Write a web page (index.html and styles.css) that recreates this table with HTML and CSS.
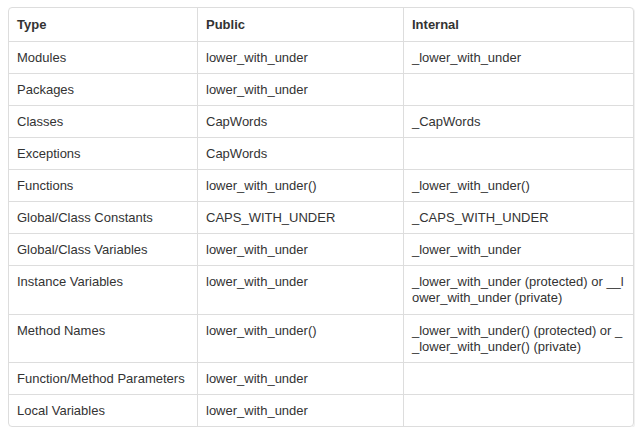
FILE: index.html
```html
<!DOCTYPE html>
<html>
<head>
<meta charset="utf-8">
<link rel="stylesheet" href="styles.css">
</head>
<body>
<div class="wrap">
<table class="names">
<colgroup><col class="c1"><col class="c2"><col class="c3"></colgroup>
<thead>
<tr><th>Type</th><th>Public</th><th>Internal</th></tr>
</thead>
<tbody>
<tr><td>Modules</td><td>lower_with_under</td><td>_lower_with_under</td></tr>
<tr><td>Packages</td><td>lower_with_under</td><td></td></tr>
<tr><td>Classes</td><td>CapWords</td><td>_CapWords</td></tr>
<tr><td>Exceptions</td><td>CapWords</td><td></td></tr>
<tr><td>Functions</td><td>lower_with_under()</td><td>_lower_with_under()</td></tr>
<tr><td>Global/Class Constants</td><td>CAPS_WITH_UNDER</td><td>_CAPS_WITH_UNDER</td></tr>
<tr><td>Global/Class Variables</td><td>lower_with_under</td><td>_lower_with_under</td></tr>
<tr class="tall"><td>Instance Variables</td><td>lower_with_under</td><td>_lower_with_under (protected) or __l<br>ower_with_under (private)</td></tr>
<tr><td>Method Names</td><td>lower_with_under()</td><td>_lower_with_under() (protected) or _<br>_lower_with_under() (private)</td></tr>
<tr><td>Function/Method Parameters</td><td>lower_with_under</td><td></td></tr>
<tr><td>Local Variables</td><td>lower_with_under</td><td></td></tr>
</tbody>
</table>
</div>
</body>
</html>
```
FILE: styles.css
```css
html, body {
  margin: 0;
  padding: 0;
  background: #fff;
}
.wrap {
  padding: 7px 6px 0 8px;
}
.names {
  width: 626px;
  border-collapse: separate;
  border-spacing: 0;
  border: 1px solid #ddd;
  border-radius: 4px;
  box-shadow: 1px 1px 0 #f0f0f0;
  font-family: "Liberation Sans", Arial, sans-serif;
  font-size: 13px;
  line-height: 16px;
  color: #333;
  table-layout: fixed;
}
.c1 { width: 188px; }
.c2 { width: 206px; }
.c3 { width: auto; }
.names th, .names td {
  text-align: left;
  vertical-align: top;
  padding: 8px 8px 7px 8px;
  border-top: 1px solid #ddd;
  border-left: 1px solid #ddd;
}
.names th:first-child, .names td:first-child { border-left: 0; }
.names thead th {
  border-top: 0;
  font-weight: bold;
  padding-top: 9px;
  padding-bottom: 8px;
}
.names .tall td {
  padding-bottom: 8px;
}
```
